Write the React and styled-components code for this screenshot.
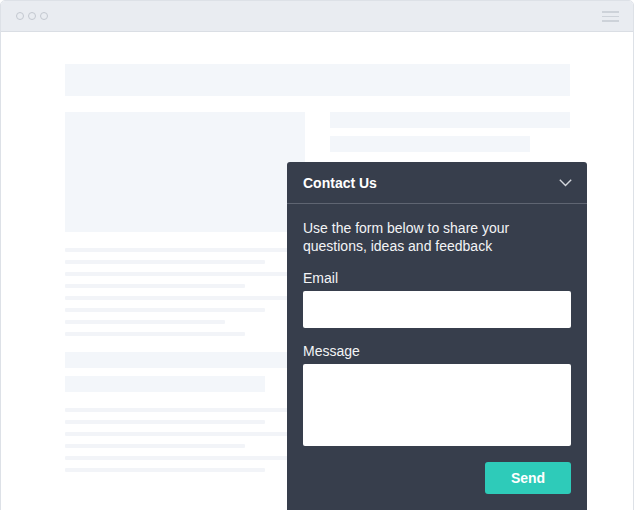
import styled, { createGlobalStyle } from "styled-components";

const GlobalStyle = createGlobalStyle`
  html, body {
    margin: 0;
    padding: 0;
    background: #ffffff;
    font-family: "Liberation Sans", Arial, sans-serif;
  }
`;

const Stage = styled.div`
  width: 636px;
  height: 510px;
  overflow: hidden;
  background: #ffffff;
`;

const Window = styled.div`
  position: relative;
  width: 634px;
  min-height: 540px;
  box-sizing: border-box;
  border: 1px solid #dde1e7;
  border-radius: 5px 5px 0 0;
  background: #ffffff;
`;

const TopBar = styled.div`
  height: 30px;
  display: flex;
  align-items: center;
  justify-content: space-between;
  padding: 0 14px 0 15px;
  background: #e9ecf1;
  border-bottom: 1px solid #dadee4;
  border-radius: 4px 4px 0 0;
`;

const Dots = styled.div`
  display: flex;
  gap: 4px;
`;

const Dot = styled.span`
  width: 6px;
  height: 6px;
  border-radius: 50%;
  border: 1.5px solid #c3c8d0;
`;

const Burger = styled.div`
  display: flex;
  flex-direction: column;
  gap: 3px;
  width: 17px;
  margin-top: 1px;

  span {
    height: 1.5px;
    background: #cdd2d9;
  }
`;

const Content = styled.div`
  padding: 32px 63px 0 64px;
  display: flex;
  flex-direction: column;
  gap: 16px;
`;

const Block = styled.div`
  width: ${(p) => p.$w || "100%"};
  height: ${(p) => p.$h}px;
  background: #f3f6fa;
  flex-shrink: 0;
`;

const Columns = styled.div`
  display: grid;
  grid-template-columns: 240px 240px;
  column-gap: 25px;
`;

const Column = styled.div`
  display: flex;
  flex-direction: column;
`;

const Lines = styled.div`
  display: flex;
  flex-direction: column;
  gap: 8px;
  margin: ${(p) => p.$m || "16px 0 0"};
`;

const Line = styled.div`
  height: 4px;
  width: ${(p) => p.$w || "100%"};
  background: #f2f4f8;
  border-radius: 1px;
`;

const Stack = styled.div`
  display: flex;
  flex-direction: column;
  gap: ${(p) => p.$gap}px;
  margin-top: ${(p) => p.$mt || 0}px;
`;

const Panel = styled.div`
  position: absolute;
  left: 286px;
  top: 161px;
  width: 300px;
  background: #373e4c;
  border-radius: 3px 3px 0 0;
  color: #ffffff;
`;

const PanelHeader = styled.div`
  height: 41px;
  display: flex;
  align-items: center;
  justify-content: space-between;
  padding: 0 15px 0 16px;
  border-bottom: 1px solid #5f6572;
  font-size: 14px;
  font-weight: 700;
`;

const PanelBody = styled.div`
  padding: 15px 16px 16px;
  display: flex;
  flex-direction: column;
`;

const Intro = styled.p`
  margin: 0;
  font-size: 14px;
  line-height: 18px;
  color: #f3f4f6;
`;

const Label = styled.label`
  display: block;
  margin-top: 14px;
  font-size: 14px;
  line-height: 18px;
  color: #f3f4f6;
`;

const Input = styled.input`
  margin-top: 4px;
  height: 37px;
  box-sizing: border-box;
  border: none;
  border-radius: 2px;
  background: #ffffff;
  outline: none;
`;

const TextArea = styled.textarea`
  margin-top: 4px;
  height: 82px;
  box-sizing: border-box;
  border: none;
  border-radius: 2px;
  background: #ffffff;
  resize: none;
  outline: none;
`;

const Actions = styled.div`
  display: flex;
  justify-content: flex-end;
  margin-top: 16px;
`;

const SendButton = styled.button`
  width: 86px;
  height: 32px;
  border: none;
  border-radius: 3px;
  background: #2ecbb9;
  color: #ffffff;
  font-family: "Liberation Sans", Arial, sans-serif;
  font-size: 14px;
  font-weight: 700;
  cursor: pointer;
`;

const Chevron = () => (
  <svg width="13" height="8" viewBox="0 0 13 8" fill="none">
    <polyline
      points="0.8,0.8 6.5,6.5 12.2,0.8"
      stroke="#d3d6dc"
      strokeWidth="1.4"
    />
  </svg>
);

const App = () => {
  return (
    <Stage>
      <GlobalStyle />
      <Window>
        <TopBar>
          <Dots>
            <Dot />
            <Dot />
            <Dot />
          </Dots>
          <Burger>
            <span />
            <span />
            <span />
          </Burger>
        </TopBar>
        <Content>
          <Block $h={32} />
          <Columns>
            <Column>
              <Block $h={120} />
              <Lines>
                <Line />
                <Line $w="200px" />
                <Line />
                <Line $w="180px" />
                <Line />
                <Line $w="200px" />
                <Line $w="160px" />
                <Line $w="180px" />
              </Lines>
              <Stack $gap={8} $mt={16}>
                <Block $h={16} />
                <Block $h={16} $w="200px" />
              </Stack>
              <Lines>
                <Line />
                <Line $w="200px" />
                <Line />
                <Line $w="180px" />
                <Line />
                <Line $w="200px" />
              </Lines>
            </Column>
            <Column>
              <Stack $gap={8}>
                <Block $h={16} />
                <Block $h={16} $w="200px" />
              </Stack>
            </Column>
          </Columns>
        </Content>
        <Panel>
          <PanelHeader>
            <span>Contact Us</span>
            <Chevron />
          </PanelHeader>
          <PanelBody>
            <Intro>
              Use the form below to share your
              <br />
              questions, ideas and feedback
            </Intro>
            <Label>Email</Label>
            <Input type="email" />
            <Label>Message</Label>
            <TextArea />
            <Actions>
              <SendButton>Send</SendButton>
            </Actions>
          </PanelBody>
        </Panel>
      </Window>
    </Stage>
  );
};

export default App;
